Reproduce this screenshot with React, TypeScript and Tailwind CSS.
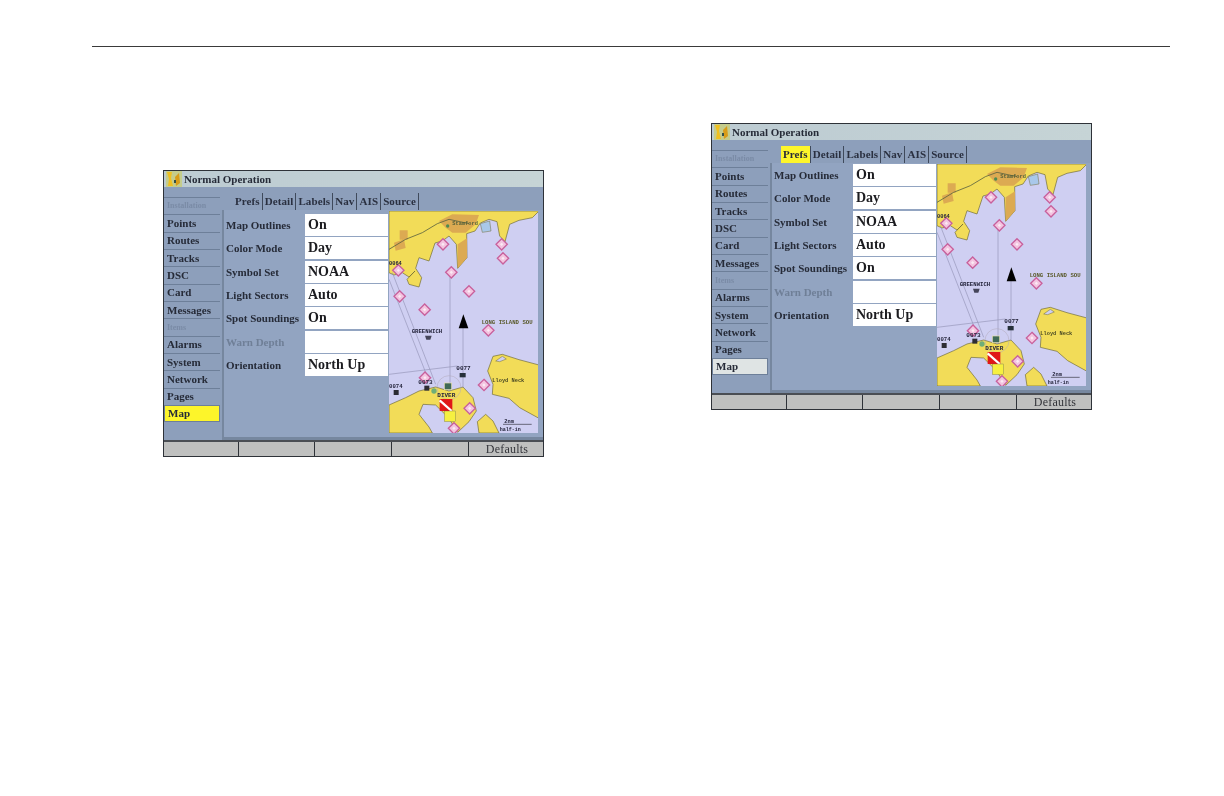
import clsx from 'clsx';

const sidebarItems = [
    { label: 'Installation', faint: true },
    { label: 'Points' },
    { label: 'Routes' },
    { label: 'Tracks' },
    { label: 'DSC' },
    { label: 'Card' },
    { label: 'Messages' },
    { label: 'Items', faint: true },
    { label: 'Alarms' },
    { label: 'System' },
    { label: 'Network' },
    { label: 'Pages' },
    { label: 'Map' },
];

const tabs = ['Prefs', 'Detail', 'Labels', 'Nav', 'AIS', 'Source'];

const settings = [
    { label: 'Map Outlines', value: 'On' },
    { label: 'Color Mode', value: 'Day' },
    { label: 'Symbol Set', value: 'NOAA' },
    { label: 'Light Sectors', value: 'Auto' },
    { label: 'Spot Soundings', value: 'On' },
    { label: 'Warn Depth', value: '', faint: true },
    { label: 'Orientation', value: 'North Up' },
];

// diamond markers, in the map's own coordinates
const diamonds = [
    [172, 240], [348, 240], [352, 282], [197, 324], [250, 381], [42, 396], [117, 436],
    [308, 498], [295, 662], [118, 640], [252, 732], [205, 792], [38, 318],
];

function Logo() {
    return (
        <svg width="16" height="16" viewBox="0 0 16 16" className="mx-[2px] shrink-0">
            <rect width="16" height="16" fill="#c4cc8c" />
            <path d="M1 1h5L5 7l2 8H2l1-7z" fill="#f0c020" />
            <path d="M9 6l4-4 1 10-4 3z" fill="#d89c18" />
            <path d="M8 9h2v3H8z" fill="#33504a" />
        </svg>
    );
}

function ChartMap() {
    return (
        <svg width="149" height="222" viewBox="10 140 447 666" className="shrink-0">
            <rect x="10" y="140" width="450" height="666" fill="#cfcff2" />
            <path
                d="M10 140H460L440 160 400 168 372 180 358 232 342 215 334 172 310 165 284 176 268 200 243 208 244 280 216 312 212 240 190 215 170 230 148 236 130 290 100 280 90 312 108 340 100 368 70 360 64 345 88 320 70 338 50 325 25 332 10 325Z"
                fill="#f2dc58"
                stroke="#6e6a34"
                strokeWidth="2"
            />
            <path d="M160 170L200 150 280 152 270 180 240 205 200 205 180 190Z" fill="#dcaa52" />
            <path d="M216 240L244 222 244 280 216 312Z" fill="#dcaa52" />
            <path d="M42 198h24v28H42zM25 235l30-10 5 26-30 8z" fill="#dcaa52" />
            <path d="M10 255L60 225 110 205 155 178 190 165 250 178" fill="none" stroke="#5b6340" strokeWidth="2.5" />
            <path d="M284 178L312 170 316 200 290 204Z" fill="#a9c8ea" stroke="#6e6a34" strokeWidth="1.5" />
            <circle cx="186" cy="185" r="5" fill="#4e8a50" />
            <path
                d="M10 722L60 700 100 680 150 668 190 680 232 668 262 700 272 740 250 772 216 804 188 760 150 722 112 720 100 750 130 788 140 806H10Z"
                fill="#f2dc58"
                stroke="#6e6a34"
                strokeWidth="2"
            />
            <path d="M275 772L300 750 322 770 340 806H280Z" fill="#f2dc58" stroke="#6e6a34" strokeWidth="2" />
            <path
                d="M460 602L400 586 350 570 322 576 306 620 322 660 320 690 370 702 402 730 460 762Z"
                fill="#f2dc58"
                stroke="#6e6a34"
                strokeWidth="2"
            />
            <path d="M330 590l20-14 12 8-20 8z" fill="#cfcff2" stroke="#6e6a34" strokeWidth="1.5" />
            <g stroke="#9696b8" strokeWidth="2" fill="none">
                <path d="M193 330V680" />
                <path d="M232 490V670" />
                <path d="M20 325L150 660" />
                <path d="M10 345L130 650" />
                <path d="M10 630L215 605" />
            </g>
            <circle cx="190" cy="670" r="36" fill="none" stroke="#b0a8b8" strokeWidth="1.5" />
            {diamonds.map(([x, y]) => (
                <g key={`${x}-${y}`}>
                    <path d={`M${x} ${y - 17}L${x + 17} ${y} ${x} ${y + 17} ${x - 17} ${y}Z`} fill="#f3c4e0" stroke="#c8609c" strokeWidth="4" />
                    <path d={`M${x} ${y - 5}L${x + 5} ${y} ${x} ${y + 5} ${x - 5} ${y}Z`} fill="#fbeaf4" />
                </g>
            ))}
            <path d="M233 450L248 492H219Z" fill="#000" />
            <g fontFamily='"Liberation Mono", monospace' fontWeight="700" fill="#23233a">
                <text x="200" y="182" fontSize="16" fill="#55603a">Stamford</text>
                <text x="10" y="302" fontSize="16">0064</text>
                <text x="78" y="505" fontSize="17">GREENWICH</text>
                <text x="288" y="478" fontSize="17" fill="#5a5a2c">LONG ISLAND SOU</text>
                <text x="212" y="617" fontSize="18">0077</text>
                <text x="98" y="659" fontSize="18">0073</text>
                <text x="10" y="670" fontSize="17">0074</text>
                <text x="155" y="697" fontSize="18">DIVER</text>
                <text x="320" y="654" fontSize="16" fill="#4a4a24">Lloyd Neck</text>
                <text x="356" y="775" fontSize="16">2nm</text>
                <text x="342" y="800" fontSize="15">half-in</text>
            </g>
            <path d="M352 780H438" stroke="#33333f" strokeWidth="2" />
            <path d="M118 514h20l-4 12h-12z" fill="#45455a" />
            <rect x="222" y="626" width="18" height="13" fill="#26303a" />
            <rect x="116" y="664" width="15" height="15" fill="#2c2c34" />
            <rect x="24" y="677" width="15" height="15" fill="#2c2c34" />
            <rect x="176" y="656" width="22" height="20" fill="#3f6a58" stroke="#e8e0b0" strokeWidth="2" />
            <circle cx="145" cy="680" r="8" fill="#6fae78" />
            <rect x="162" y="704" width="38" height="36" fill="#e01818" />
            <path d="M162 708L198 740" stroke="#fff" strokeWidth="7" />
            <rect x="176" y="740" width="34" height="32" fill="#f6f040" stroke="#555" strokeWidth="1" />
        </svg>
    );
}

function GpsScreen({ variant, className }: { variant: 'sidebar' | 'tabs'; className: string }) {
    const tabActive = variant === 'tabs';

    return (
        <div
            className={clsx(
                'flex h-[287px] w-[381px] flex-col border border-[#2e3238] bg-[#8d9fbb] font-["Liberation_Serif",serif] text-[#262b38]',
                className,
            )}
        >
            <div className="flex h-[16px] items-center bg-gradient-to-r from-[#bccbd2] to-[#c6d4d6] text-[11px] font-bold leading-none blur-[0.4px]">
                <Logo />
                <span>Normal Operation</span>
            </div>
            <div className="flex min-h-0 flex-1">
                <div className="w-[56px] shrink-0 pt-[10px] blur-[0.5px]">
                    {sidebarItems.map((item) => {
                        const selected = item.label === 'Map';
                        return (
                            <div
                                key={item.label}
                                className={clsx(
                                    'flex h-[17.35px] items-center border-t border-[#6d7f99] pl-[3px] font-bold leading-none',
                                    item.faint ? 'text-[8px] text-[#7a8ba6]' : 'text-[11px]',
                                    selected && !tabActive && 'border border-[#3a3a20] bg-[#fdf52a]',
                                    selected && tabActive && 'border border-[#3f4550] bg-[#dfe4e4]',
                                )}
                            >
                                {item.label}
                            </div>
                        );
                    })}
                </div>
                <div className="flex min-w-0 flex-1 flex-col pl-[2px]">
                    <div className="flex h-[23px] items-end pl-[11px] text-[11px] font-bold leading-none tracking-[0.1px] blur-[0.5px]">
                        {tabs.map((tab) => (
                            <div
                                key={tab}
                                className={clsx(
                                    'flex h-[17px] items-center border-r border-[#3f4a5c] px-[2px]',
                                    tabActive && tab === 'Prefs' ? 'bg-[#fdf52a]' : 'text-[#2a3040]',
                                )}
                            >
                                {tab}
                            </div>
                        ))}
                    </div>
                    <div className="flex flex-1 border-b-[3px] border-l-[2px] border-[#76879f] bg-[#92a4c1]">
                        <div className={clsx('w-[81px] shrink-0 pl-[2px] blur-[0.5px]', tabActive ? 'pt-[1px]' : 'pt-[4px]')}>
                            {settings.map((row) => (
                                <div
                                    key={row.label}
                                    className={clsx(
                                        'flex h-[23.33px] items-center whitespace-nowrap text-[11px] font-bold leading-none',
                                        row.faint && 'text-[#6f7f97]',
                                    )}
                                >
                                    {row.label}
                                </div>
                            ))}
                        </div>
                        <div className={clsx('w-[83px] shrink-0', tabActive ? 'pt-[1px]' : 'pt-[4px]')}>
                            {settings.map((row) => (
                                <div key={row.label} className="flex h-[23.33px] items-start">
                                    <div className="flex h-[22px] w-full items-center bg-white pl-[3px] text-[14px] font-bold leading-none text-[#1c1c20]">
                                        <span className="blur-[0.5px]">{row.value}</span>
                                    </div>
                                </div>
                            ))}
                        </div>
                        <div className="pl-[1px] pt-[1px]">
                            <div className="blur-[0.5px]">
                                <ChartMap />
                            </div>
                        </div>
                    </div>
                </div>
            </div>
            <div className="grid h-[16px] grid-cols-[75px_76px_77px_77px_1fr] border-t-2 border-[#4a4e54] bg-[#bfc0bf] text-[11px] leading-none text-[#33343a]">
                <div className="border-r border-[#2e3238]" />
                <div className="border-r border-[#2e3238]" />
                <div className="border-r border-[#2e3238]" />
                <div className="border-r border-[#2e3238]" />
                <div className="flex items-center justify-center pl-[2px] text-[12px] tracking-[0.2px] blur-[0.3px]">Defaults</div>
            </div>
        </div>
    );
}

export default function App() {
    return (
        <div className="min-h-screen bg-white pt-[46px]">
            <div className="ml-[92px] h-px w-[1078px] bg-[#3a3a3a]" />
            <div className="flex items-start gap-[167px] pl-[163px]">
                <GpsScreen variant="sidebar" className="mt-[123px]" />
                <GpsScreen variant="tabs" className="mt-[76px]" />
            </div>
        </div>
    );
}
